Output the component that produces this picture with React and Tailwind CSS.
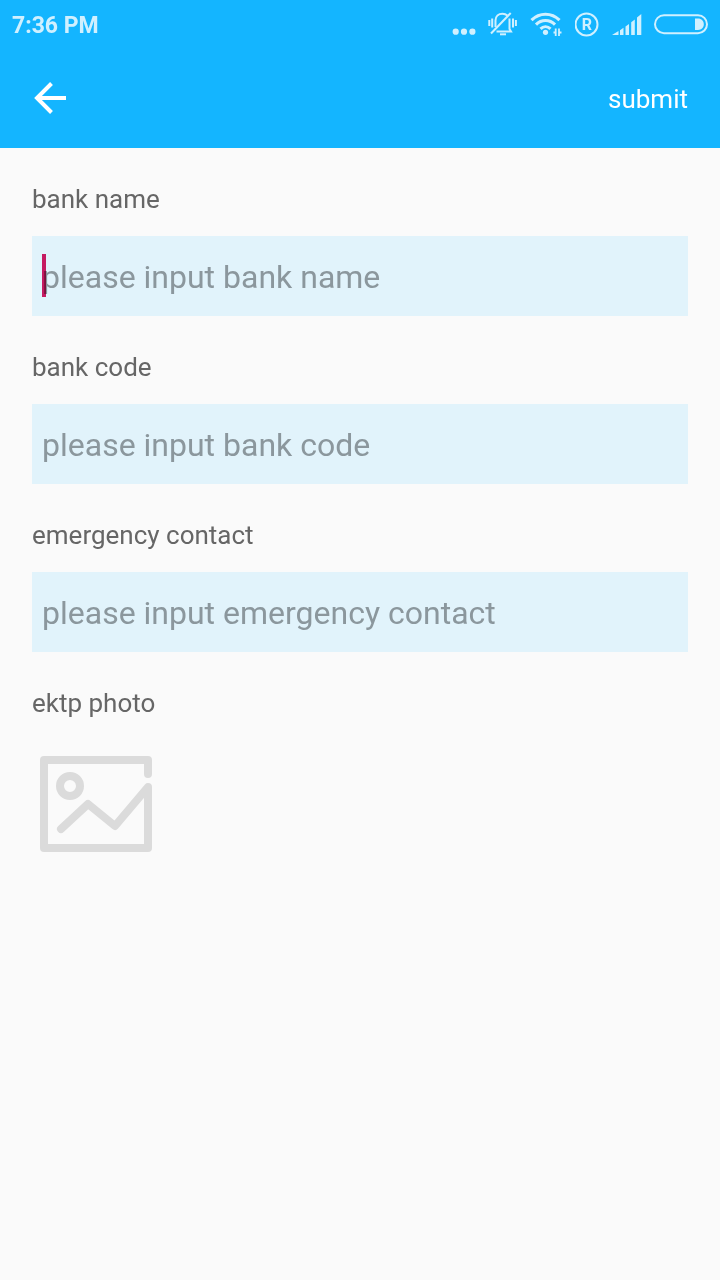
import React, { useState } from "react";

const fields = [
    { id: "bankName", label: "bank name", placeholder: "please input bank name" },
    { id: "bankCode", label: "bank code", placeholder: "please input bank code" },
    { id: "emergencyContact", label: "emergency contact", placeholder: "please input emergency contact" },
];

const StatusBar = () => (
    <div className="flex h-12 items-center justify-between px-3 text-[#d0f0ff]">
        <span className="pt-1 text-[23px] leading-7 font-bold">7:36 PM</span>
        <div className="flex items-center gap-3">
            <svg width="24" height="28" viewBox="0 0 24 28" fill="currentColor">
                <circle cx="3.7" cy="21.7" r="3.1" />
                <circle cx="12" cy="21.7" r="3.1" />
                <circle cx="20.4" cy="21.7" r="3.1" />
            </svg>

            {/* Silent */}
            <svg width="30" height="28" viewBox="0 0 30 28" fill="none" stroke="currentColor" strokeWidth="2">
                <path d="M7.5 17V10.5C7.500 6 10.500 3.700 14.500 3.700c2 0 3.500.5 4.800 1.800" />
                <path d="M21.500 8.500V19l1.500 2.500H8.500" />
                <path d="M12 24.300h6" />
                <path d="M3 23.500 22.700 3" />
                <path d="M1.300 10v6M4.200 8.500v9M25 8.500v9M27.900 10v6" />
            </svg>

            {/* Wifi */}
            <svg width="33" height="28" viewBox="0 0 33 28" fill="none" stroke="currentColor" strokeWidth="3.1">
                <path d="M1.500 10.200C9.500 2.200 21.500 2.200 29.500 10.200" />
                <path d="M6 14.600C11.500 9.200 19.500 9.200 25 14.600" />
                <path d="M10.500 18.900C13.500 16 17.500 16 20.500 18.900" />
                <circle cx="15.500" cy="22.300" r="2.600" fill="currentColor" stroke="none" />
                <path d="M25.700 18.500v7.500M29 18.500v7.500" strokeWidth="1.800" />
                <path d="M23.500 22.500h2M29 22.500h2.500" strokeWidth="2" />
            </svg>

            {/* Roaming */}
            <svg width="25" height="28" viewBox="0 0 25 28">
                <circle cx="11.500" cy="14.500" r="11" fill="none" stroke="currentColor" strokeWidth="2" />
                <text x="11.800" y="20.300" textAnchor="middle" fontSize="16" fontWeight="700" fill="currentColor">R</text>
            </svg>

            {/* Signal */}
            <svg width="30" height="28" viewBox="0 0 30 28" fill="currentColor">
                <path d="M0 25 6.500 21V25ZM8 20.200 11.500 17.800V25H8ZM13.500 16.500 17 14V25H13.500ZM19.200 12.300 22.800 9.500V25H19.200ZM25 7.500 29.300 4V25H25Z" />
            </svg>

            {/* Battery */}
            <svg width="54" height="28" viewBox="0 0 54 28">
                <rect x="1" y="5.200" width="52" height="18" rx="9" fill="none" stroke="currentColor" strokeWidth="2" />
                <path d="M41 8.500h3c3.500 0 5.800 2.500 5.800 5.700s-2.300 5.700-5.800 5.700h-3Z" fill="currentColor" />
            </svg>
        </div>
    </div>
);

const App = () => {
    const [values, setValues] = useState({ bankName: "", bankCode: "", emergencyContact: "" });

    const handleChange = (e) => {
        setValues({ ...values, [e.target.id]: e.target.value });
    };

    return (
        <form
            className="min-h-screen bg-[#fafafa] font-['Roboto',sans-serif]"
            onSubmit={(e) => e.preventDefault()}
        >
            <header className="bg-[#14b5ff]">
                <StatusBar />
                <div className="flex h-[100px] items-center justify-between px-8">
                    <button type="button" aria-label="back" className="text-white">
                        <svg width="36" height="36" viewBox="0 0 36 36" fill="none" stroke="currentColor" strokeWidth="4">
                            <path d="M34 18H5M19.500 3.500 5 18l14.500 14.500" />
                        </svg>
                    </button>
                    <button type="submit" className="pt-0.5 text-[26px] leading-10 text-white">submit</button>
                </div>
            </header>

            <main className="px-8">
                {fields.map((field, index) => (
                    <div key={field.id} className="pt-8">
                        <label htmlFor={field.id} className="block text-[26px] leading-[38px] text-[#666666]">
                            {field.label}
                        </label>
                        <div className="relative mt-[18px]">
                            <input
                                id={field.id}
                                type="text"
                                value={values[field.id]}
                                onChange={handleChange}
                                placeholder={field.placeholder}
                                className="block h-20 w-full bg-[#e1f3fb] px-[10px] pt-0.5 text-[32px] text-[#333333] caret-[#d81b60] outline-none placeholder:text-[#8b979d]"
                            />
                            {/* Cursor of the active field */}
                            {index === 0 && values[field.id] === "" && (
                                <span className="pointer-events-none absolute top-[18px] left-[10px] h-[43px] w-1 bg-[#e01b62] mix-blend-multiply" />
                            )}
                        </div>
                    </div>
                ))}

                <div className="pt-8">
                    <label htmlFor="ektpPhoto" className="block text-[26px] leading-[38px] text-[#666666]">
                        ektp photo
                    </label>
                    <button id="ektpPhoto" type="button" className="mt-[18px] block p-2">
                        <svg
                            width="112"
                            height="112"
                            viewBox="0 0 112 112"
                            fill="none"
                            stroke="#dbdbdb"
                            strokeWidth="8"
                            strokeLinecap="round"
                            strokeLinejoin="round"
                        >
                            <path d="M108 26V12H4v88h104V39L75 78 48 56 21 81" />
                            <circle cx="30" cy="38" r="10" />
                        </svg>
                    </button>
                </div>
            </main>
        </form>
    );
};

export default App;
